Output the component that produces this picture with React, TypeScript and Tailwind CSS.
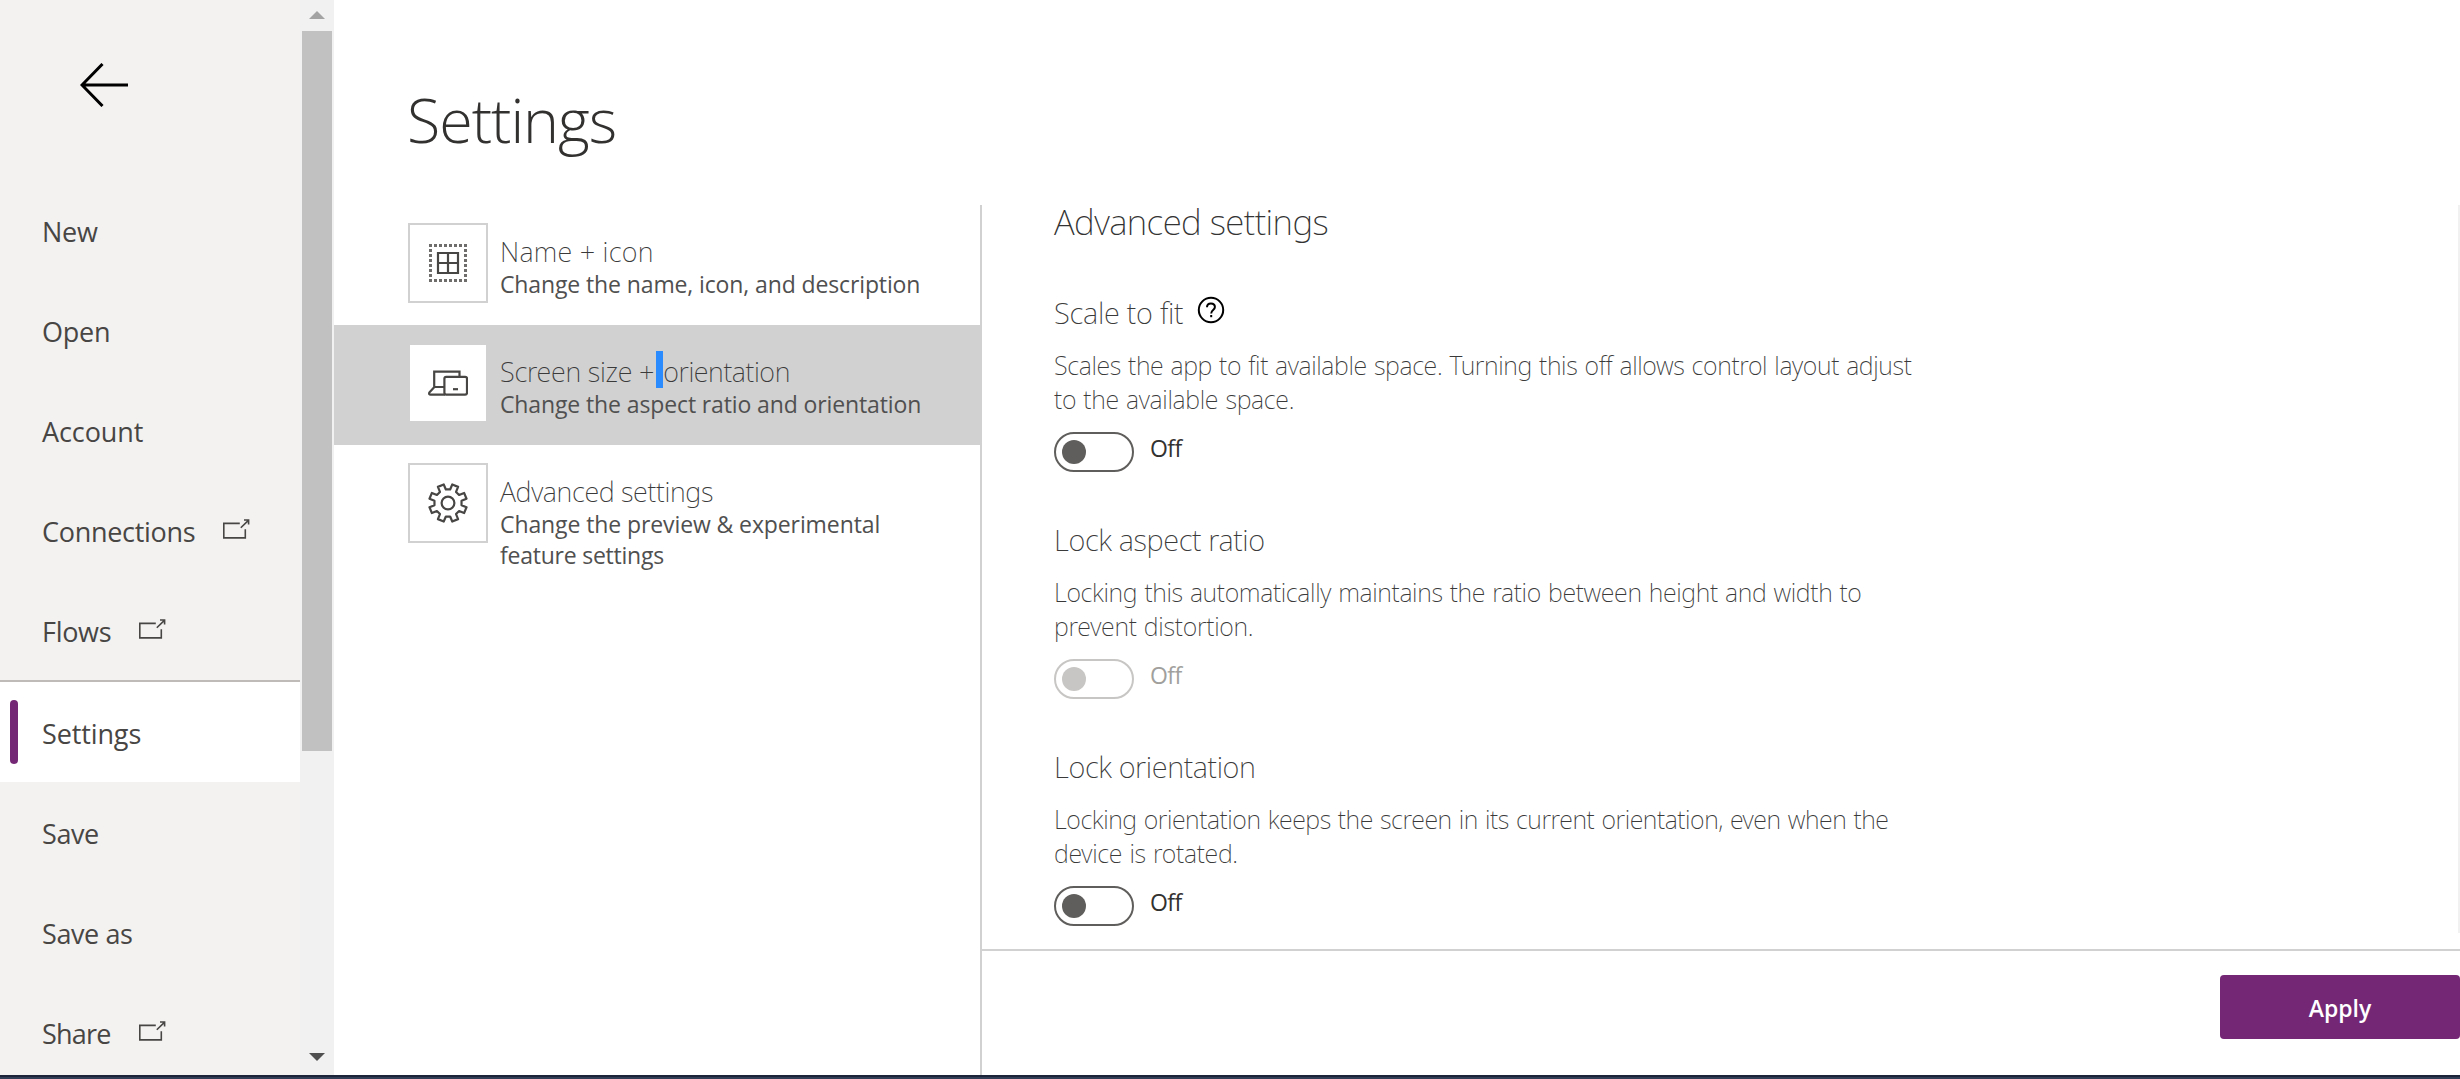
import type { ReactNode } from "react";

type NavItem = { label: string; tracking: string; external?: boolean; selected?: boolean };

const navItems: NavItem[] = [
  { label: "New", tracking: "tracking-[-0.25px]" },
  { label: "Open", tracking: "tracking-[-0.2px]" },
  { label: "Account", tracking: "tracking-[-0.1px]" },
  { label: "Connections", tracking: "tracking-[-0.3px]", external: true },
  { label: "Flows", tracking: "tracking-[-0.3px]", external: true },
  { label: "Settings", tracking: "tracking-[-0.12px]", selected: true },
  { label: "Save", tracking: "tracking-[-0.4px]" },
  { label: "Save as", tracking: "tracking-[-0.4px]" },
  { label: "Share", tracking: "tracking-[-0.8px]", external: true },
];

function ExternalIcon() {
  return (
    <svg width="27" height="20" viewBox="0 0 27 20" fill="none" stroke="#484644" strokeWidth="1.6" className="mb-[3px] ml-[28px]">
      <path d="M16.8 4.4H.8V18.9H22.3V10.2" />
      <path d="M17.8 8.8L25.4 1.4M21 1H25.6V5.6" />
    </svg>
  );
}

function BackIcon() {
  return (
    <svg width="48" height="44" viewBox="0 0 48 44" fill="none" stroke="#000" strokeWidth="3">
      <path d="M48 22H2M22.5 1L2 22L22.5 43" />
    </svg>
  );
}

const gridDots = [0, 1, 2, 3, 4, 5, 6, 7].map((i) => 1 + i * 5);

function AppIcon() {
  return (
    <svg width="40" height="40" viewBox="0 0 40 40" fill="none">
      {gridDots.map((p) => (
        <g key={p} fill="#6f6d6b">
          <rect x={p} y="1" width="3" height="3" />
          <rect x={p} y="36" width="3" height="3" />
          <rect x="1" y={p} width="3" height="3" />
          <rect x="36" y={p} width="3" height="3" />
        </g>
      ))}
      <path d="M10 10H30V30H10ZM20 10V30M10 20H30" stroke="#484644" strokeWidth="2.2" />
    </svg>
  );
}

function DevicesIcon() {
  return (
    <svg width="40" height="40" viewBox="0 0 40 40" fill="none" stroke="#484644" strokeWidth="2.2">
      <path d="M31.5 13V8.6H6.2V24H16M6.4 24L1.3 29.6Q.6 31.6 2.6 31.6H17" />
      <rect x="16.4" y="13.8" width="22.6" height="17.8" rx="1.8" />
      <path d="M25 26.2H30" />
    </svg>
  );
}

const polar = (r: number, deg: number) => {
  const a = (deg * Math.PI) / 180;
  return `${(20 + r * Math.sin(a)).toFixed(2)} ${(20 - r * Math.cos(a)).toFixed(2)}`;
};
// Eight teeth with a notch centred on every multiple of 45 degrees.
const gearPath =
  "M" +
  [0, 45, 90, 135, 180, 225, 270, 315]
    .flatMap((d) => [polar(19, d - 13), polar(13.7, d - 9), polar(13.7, d + 9), polar(19, d + 13)])
    .join("L") +
  "Z";

function GearIcon() {
  return (
    <svg width="40" height="40" viewBox="0 0 40 40" fill="none" stroke="#484644" strokeWidth="2.2" strokeLinejoin="round">
      <path d={gearPath} />
      <circle cx="20" cy="20" r="6.4" />
    </svg>
  );
}

function HelpIcon() {
  return (
    <svg width="28" height="28" viewBox="0 0 28 28" fill="none" stroke="#000" strokeWidth="2" className="mb-[4px] ml-[14px]">
      <circle cx="14" cy="14" r="12.2" />
      <path d="M10 11.2C10 8.8 11.6 7.5 13.9 7.5C16.3 7.5 17.9 8.9 17.9 11C17.9 14 14.2 14 14.2 17.4" />
      <path d="M14.2 19V21.2" />
    </svg>
  );
}

function SettingsEntry({ icon, title, lines, selected }: { icon: ReactNode; title: ReactNode; lines: ReactNode; selected?: boolean }) {
  return (
    <div className={`flex h-[120px] items-start pt-[18px] pl-[74px] ${selected ? "bg-[#d1d1d1]" : ""}`}>
      <div className="flex h-[80px] w-[80px] shrink-0 items-center justify-center border-2 border-[#d1d1d1] bg-white">{icon}</div>
      <div className="pt-[11px] pl-[12px] whitespace-nowrap">
        <div className="flex h-[35px] items-center font-['Noto_Sans',sans-serif] text-[27px] leading-[35px] font-extralight text-[#3a3a3a]">{title}</div>
        <div className="text-[23px] leading-[31px] text-[#505050]">{lines}</div>
      </div>
    </div>
  );
}

function ToggleSetting({ title, help, lines, disabled }: { title: ReactNode; help?: boolean; lines: ReactNode; disabled?: boolean }) {
  return (
    <section className="h-[227px] whitespace-nowrap">
      <div className="flex h-10 items-center font-['Noto_Sans',sans-serif] text-[29px] font-extralight text-[#3a3a3a]">
        <span className="pt-px">{title}</span>
        {help && <HelpIcon />}
      </div>
      <p className="mt-4 font-['Noto_Sans',sans-serif] text-[25px] leading-[34px] font-extralight text-[#3a3a3a] [word-spacing:1px]">{lines}</p>
      <div className="mt-4 flex">
        <div className={`flex h-10 w-20 items-center rounded-full border-2 pl-[6px] ${disabled ? "border-[#c8c6c4]" : "border-[#605e5c]"}`}>
          <div className={`h-6 w-6 rounded-full ${disabled ? "bg-[#c8c6c4]" : "bg-[#605e5c]"}`} />
        </div>
        <span className={`ml-4 text-[23px] leading-8 tracking-[-0.6px] ${disabled ? "text-[#a19f9d]" : "text-[#323130]"}`}>Off</span>
      </div>
    </section>
  );
}

export default function App() {
  return (
    <div className="flex h-[1079px] w-[2460px] flex-col overflow-hidden bg-white font-['Open_Sans',sans-serif]">
      <div className="flex h-[1075px]">
        <nav className="w-[300px] overflow-hidden bg-[#f3f2f1]">
          <div className="h-[180px] pt-[63px] pl-[80px]">
            <BackIcon />
          </div>
          {navItems.map((item) => (
            <div
              key={item.label}
              className={`flex items-center text-[27px] text-[#484644] ${item.selected ? "h-[102px] border-t-2 border-[#bebbb8] bg-white" : "h-[100px]"}`}
            >
              <div className={`ml-[10px] h-16 w-2 rounded-full ${item.selected ? "bg-[#742774]" : ""}`} />
              <span className={`ml-6 pt-[4px] whitespace-nowrap ${item.tracking}`}>{item.label}</span>
              {item.external && <ExternalIcon />}
            </div>
          ))}
        </nav>

        <div className="flex w-[34px] flex-col items-center bg-[#f1f1f1]">
          <svg width="16" height="8" viewBox="0 0 16 8" className="mt-[11px]">
            <path d="M8 0L16 8H0Z" fill="#a3a3a3" />
          </svg>
          <div className="mt-[12px] h-[720px] w-[30px] bg-[#c1c1c1]" />
          <svg width="16" height="8" viewBox="0 0 16 8" className="mt-auto mb-[14px]">
            <path d="M0 0H16L8 8Z" fill="#505050" />
          </svg>
        </div>

        <main className="flex flex-1 flex-col">
          <h1 className="h-[205px] pt-[80px] pl-[73px] text-[61px] leading-[80px] font-light tracking-[-1.05px] text-[#323130]">Settings</h1>
          <div className="flex flex-1">
            <div className="w-[648px] border-r-2 border-[#d1d1d1]">
              <SettingsEntry
                icon={<AppIcon />}
                title={<span className="tracking-[0.25px]">Name + icon</span>}
                lines={<div className="tracking-[-0.12px]">Change the name, icon, and description</div>}
              />
              <SettingsEntry
                selected
                icon={<DevicesIcon />}
                title={
                  <>
                    <span className="tracking-[-0.24px]">Screen size +</span>
                    <span className="-mt-[4px] ml-[2px] h-[37px] w-[7px] bg-[#2a8bff]"> </span>
                    <span className="tracking-[-0.42px]">orientation</span>
                  </>
                }
                lines={<div className="tracking-[-0.12px]">Change the aspect ratio and orientation</div>}
              />
              <SettingsEntry
                icon={<GearIcon />}
                title={<span className="tracking-[-0.35px]">Advanced settings</span>}
                lines={
                  <>
                    <div className="tracking-[-0.1px]">Change the preview &amp; experimental</div>
                    <div className="tracking-[-0.23px]">feature settings</div>
                  </>
                }
              />
            </div>

            <div className="flex flex-1 flex-col">
              <div className="flex h-[744px]">
                <div className="flex-1 pl-[72px]">
                  <h2 className="mb-[54px] pt-px font-['Noto_Sans',sans-serif] text-[35px] leading-8 font-extralight tracking-[-0.58px] text-[#333]">
                    Advanced settings
                  </h2>
                  <ToggleSetting
                    help
                    title={<span className="tracking-[-0.25px]">Scale to fit</span>}
                    lines={
                      <>
                        <span className="block tracking-[-0.36px]">
                          Scales the app to fit available space. Turning this off allows control layout adjust
                        </span>
                        <span className="block tracking-[-0.3px]">to the available space.</span>
                      </>
                    }
                  />
                  <ToggleSetting
                    disabled
                    title={<span className="tracking-[-0.37px]">Lock aspect ratio</span>}
                    lines={
                      <>
                        <span className="block tracking-[-0.34px]">
                          Locking this automatically maintains the ratio between height and width to
                        </span>
                        <span className="block tracking-[-0.27px]">prevent distortion.</span>
                      </>
                    }
                  />
                  <ToggleSetting
                    title={<span className="tracking-[-0.38px]">Lock orientation</span>}
                    lines={
                      <>
                        <span className="block tracking-[-0.43px]">
                          Locking orientation keeps the screen in its current orientation, even when the
                        </span>
                        <span className="block tracking-[-0.29px]">device is rotated.</span>
                      </>
                    }
                  />
                </div>
                <div className="h-[728px] w-[2px] bg-[#f1f1f1]" />
              </div>
              <div className="flex flex-1 items-start justify-end border-t-2 border-[#d1d1d1] pt-6">
                <button className="h-16 w-[240px] rounded-[4px] bg-[#742774] pt-[2px] text-[23px] font-semibold text-white">Apply</button>
              </div>
            </div>
          </div>
        </main>
      </div>
      <div className="h-[4px] border-t-2 border-[#1b2438] bg-[#313d55]" />
    </div>
  );
}
